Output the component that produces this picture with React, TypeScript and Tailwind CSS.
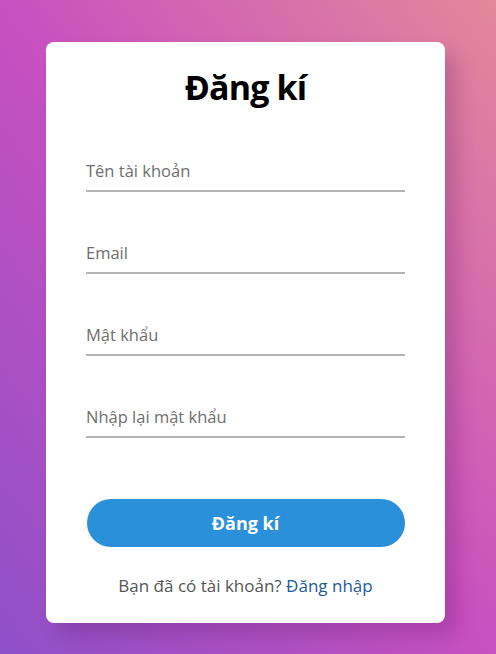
import React from 'react';

const fields = ['Tên tài khoản', 'Email', 'Mật khẩu', 'Nhập lại mật khẩu'];

export default function App() {
  return (
    <div
      className="min-h-[654px] w-full flex justify-center pt-[42px] pr-[5px] bg-[linear-gradient(to_top_right,#8e50c8_0%,#c850c0_50%,#e3889a_100%)]"
      style={{ fontFamily: '"Open Sans", "Noto Sans", sans-serif' }}
    >
      {/* Register card */}
      <div className="w-[399px] h-[581px] bg-white rounded-lg shadow-[12px_12px_18px_rgba(60,0,60,0.18)] flex flex-col items-center pt-[24px]">
        <h1 className="text-[34px] leading-[42px] font-bold text-black tracking-tight">Đăng kí</h1>

        <form className="w-[319px] mt-[46px] flex flex-col gap-[44px]">
          {fields.map((label) => (
            <div key={label} className="h-[38px] flex items-end pb-[6px] border-b-2 border-[#b3b3b3]">
              <input
                type="text"
                placeholder={label}
                className="w-full bg-transparent outline-none text-[16.5px] leading-[26px] text-[#555] placeholder:text-[#6e6e6e]"
              />
            </div>
          ))}
        </form>

        <button className="w-[318px] h-[48px] mt-[61px] rounded-full bg-[#2a90d9] text-white text-[18px] font-bold">
          Đăng kí
        </button>

        <p className="mt-[26px] text-[17px] text-[#555]">
          Bạn đã có tài khoản? <a className="text-[#1a5b9c]">Đăng nhập</a>
        </p>
      </div>
    </div>
  );
}
